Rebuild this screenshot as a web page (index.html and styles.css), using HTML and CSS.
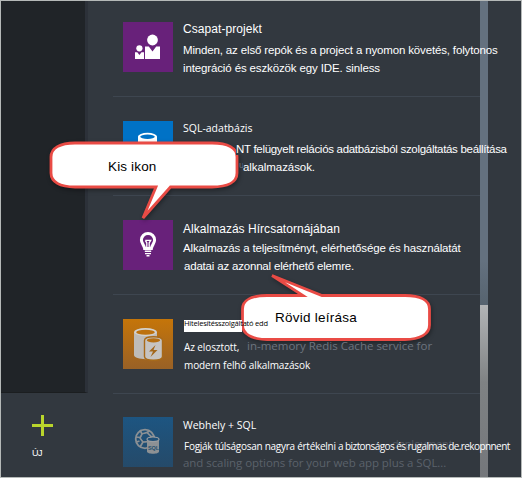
FILE: index.html
```html
<!DOCTYPE html>
<html lang="hu">
<head>
<meta charset="utf-8">
<title>Új</title>
<link rel="stylesheet" href="styles.css">
</head>
<body>
<div class="frame">
  <aside class="side">
    <div class="side-dark"></div>
    <div class="new">
      <svg width="21" height="21" viewBox="0 0 21 21"><path d="M10.5 0v21M0 10.5h21" stroke="#b9d52c" stroke-width="3"/></svg>
      <span class="new-label">ÚJ</span>
    </div>
  </aside>
  <main class="list">
    <article class="item">
      <div class="icon purple">
        <svg width="50" height="50" viewBox="0 0 50 50" fill="#fff"><circle cx="29.5" cy="18" r="5.4"/><path d="M22 24.4h3.8l3.7 5 3.7-5H37V37H22z"/><circle cx="16.4" cy="26.3" r="3.1"/><path d="M12 30.2h2.3l2.1 2.7 2.1-2.7H21V37h-9z"/></svg>
      </div>
      <div class="text">
        <h2 class="line t1">Csapat-projekt</h2>
        <p class="line gap d1">Minden, az első repók és a project a nyomon követés, folytonos</p>
        <p class="line d2">integráció és eszközök egy IDE. sinless</p>
      </div>
    </article>
    <article class="item">
      <div class="icon blue">
        <svg width="50" height="50" viewBox="0 0 50 50"><path d="M15 15.500v18c0 5 19 5 19 0v-18z" fill="#fff"/><ellipse cx="24.500" cy="15.500" rx="9.500" ry="3.700" fill="#fff"/><ellipse cx="24.500" cy="15.700" rx="7.300" ry="2.200" fill="#0072c6"/></svg>
      </div>
      <div class="text raised up">
        <h2 class="line t2">SQL-adatbázis</h2>
        <p class="line gap d3"><span class="patch">NT felügyelt relációs adatbázisból szolgáltatás beállítása</span></p>
        <p class="line d4"><span class="ghost">u</span>alkalmazások.</p>
      </div>
    </article>
    <article class="item">
      <div class="icon purple">
        <svg width="50" height="50" viewBox="0 0 50 50" fill="none" stroke="#fff"><path d="M25 13.500a6.600 6.600 0 0 0-6.600 6.600c0 3.300 2.700 4.800 3.200 8.300h6.800c.5-3.500 3.200-5 3.200-8.300a6.600 6.600 0 0 0-6.600-6.600z" stroke-width="3"/><path d="M22.300 20.300h5.400l-1.500 2.500v6M22.300 20.300l1.500 2.500v6" stroke-width="1.300"/><path d="M21.800 31.300h6.400M22 33.600h6M23.500 35.700h3" stroke-width="1.400"/></svg>
      </div>
      <div class="text up1">
        <h2 class="line t3">Alkalmazás Hírcsatornájában</h2>
        <p class="line gap1 d5">Alkalmazás a teljesítményt, elérhetősége és használatát</p>
        <p class="line d6">adatai az azonnal elérhető elemre.</p>
      </div>
    </article>
    <article class="item">
      <div class="icon orange">
        <svg width="50" height="50" viewBox="0 0 50 50"><path d="M11 13v23c0 5.500 23 5.500 23 0V13z" fill="#bfbcb8"/><ellipse cx="22.500" cy="13" rx="11.500" ry="4" fill="#d4d2ce"/><ellipse cx="22.500" cy="13.200" rx="9.300" ry="2.500" fill="#bd720f"/><path d="M21.500 21.500v16c0 5 18 5 18 0v-16c0-5-18-5-18 0z" fill="#c6c4c2" stroke="#a86a19" stroke-width="1.400"/><ellipse cx="30.500" cy="21.300" rx="6.700" ry="2.100" fill="#b56f13"/><path d="M32.500 26l-6.500 6.500h4l-2.500 5.500 7-7h-4z" fill="#a3671b"/></svg>
      </div>
      <div class="text raised">
        <h2 class="bar t4">Hitelesítésszolgáltató edd</h2>
        <p class="line gap4 d7">Az elosztott,<span class="dim memory">in-memory Redis Cache service for</span></p>
        <p class="line d8">modern felhő alkalmazások</p>
      </div>
    </article>
    <article class="item last">
      <div class="icon navy">
        <svg width="50" height="50" viewBox="0 0 50 50"><circle cx="22" cy="22" r="9.300" fill="none" stroke="#8b9094" stroke-width="1.800"/><path d="M19 17l5-1.500 4 4-2 5-6 .5-3-4zM13 20l4 .5M19 17l-2-4M24 15.500l3-2M20 25l-3 5M13.500 25l3-1M28 19.500h4" fill="none" stroke="#8b9094" stroke-width="1.700"/><path d="M20 17.500l3.500-.5 2.500 3-1 3.500-4.500.5-2-3z" fill="#205077"/><path d="M24 22.500v12c0 3 12 3 12 0v-12z" fill="#8d9194"/><ellipse cx="30" cy="22.300" rx="6" ry="2.300" fill="#205077" stroke="#9a9da0" stroke-width="1.200"/><text x="24.900" y="32.500" class="sql">SQL</text></svg>
      </div>
      <div class="text">
        <h2 class="line t5">Webhely + SQL</h2>
        <p class="line gap d9"><span class="dim deploy">deployment,</span>Fogják túlságosan nagyra értékelni <span class="tight">a biztonságos és rugalmas de.rekopnnent</span></p>
        <p class="line scaling">and scaling options for your web app plus a SQL...</p>
      </div>
    </article>
  </main>
  <div class="scroll"><div class="thumb"></div></div>

  <div class="callout one">
    <svg width="196" height="88" viewBox="46 138 196 88"><path d="M75 143H212C228 143 237 148 237 157V173C237 182 228 187 212 187H170.500L143 218L156 187H75C60 187 51 182 51 173V157C51 148 60 143 75 143Z"/></svg>
    <span class="callout-text kis">Kis ikon</span>
  </div>
  <div class="callout two">
    <svg width="196" height="76" viewBox="238 270 196 76"><path d="M267 295.500H303L272 275.500L322 295.500H405C420 295.500 429.500 300 429.500 309V325C429.500 334 420 339.500 405 339.500H267C252 339.500 242.500 334 242.500 325V309C242.500 300 252 295.500 267 295.500Z"/></svg>
    <span class="callout-text rovid">Rövid leírása</span>
  </div>
</div>
</body>
</html>
```
FILE: styles.css
```css
* { box-sizing: border-box; margin: 0; padding: 0; }
body { width: 522px; height: 478px; overflow: hidden; background: #32383f; }
svg { display: block; }

.frame {
  position: relative;
  display: flex;
  width: 522px;
  height: 478px;
  border: 1px solid #b5b9b8;
  background: #32383f;
  font-family: "Liberation Sans", sans-serif;
  color: #fff;
  overflow: hidden;
}

.side { width: 87px; flex: none; }
.side-dark {
  height: 392px;
  background: #202428;
  border-right: 3px solid #2c3139;
  border-bottom: 1px solid #1b1e20;
}
.new { padding: 22px 0 0 31px; }
.new-label { display: block; margin-top: 11px; font-size: 9px; line-height: 12px; letter-spacing: -0.6px; }

.list { width: 367px; flex: none; margin-left: 25px; }
.item { display: flex; height: 99px; padding: 24px 0 0 10px; border-bottom: 1px solid #3e4650; }
.item:first-child { height: 96px; padding-top: 21px; }
.item.last { border: 0; height: 83px; padding-top: 23px; }
.icon { width: 50px; height: 50px; flex: none; }
.purple { background: #68217a; }
.blue { background: #0072c6; }
.orange { background: linear-gradient(#c57509, #996126); }
.navy { background: linear-gradient(#1d5581, #254a69); }
.sql { font: bold 5.5px "Liberation Sans", sans-serif; fill: #25506f; }

.text { position: relative; z-index: 1; margin: -2px 0 0 10px; width: 297px; flex: none; white-space: nowrap; }
.up1 { margin-top: 0; }
.last .text { margin-top: -1px; }
.text.raised { z-index: 3; }
.line { display: block; height: 18px; font-size: 11.5px; line-height: 18px; font-weight: 400; }
.gap { margin-top: 3px; }
.gap1 { margin-top: 1px; }

.t1 { font-size: 12px; letter-spacing: 0.07px; }
.d1 { letter-spacing: -0.155px; }
.d2 { letter-spacing: -0.13px; }
.t2, .t5 { font-family: "Open Sans", sans-serif; font-size: 10.5px; }
.d3 { padding-left: 53px; letter-spacing: -0.3px; }
.patch { display: block; width: 244px; height: 15px; background: linear-gradient(90deg, #32383f 20px, transparent 20px); }
.d4 { padding-left: 56px; letter-spacing: -0.07px; }
.ghost { display: inline-block; width: 4px; height: 12px; line-height: 12px; font-size: 9px; color: #66727f; overflow: hidden; }
.t3 { font-size: 12px; letter-spacing: 0.03px; }
.d5 { letter-spacing: -0.16px; }
.d6 { padding-left: 1px; letter-spacing: -0.19px; }

.bar {
  width: 58px;
  height: 12px;
  margin: 3px 0 0 1px;
  background: #fff;
  color: #000;
  font: 7.5px/7px "Open Sans", sans-serif;
  letter-spacing: -0.21px;
}
.gap4 { margin-top: 6px; }
.d7, .d8, .d9 { padding-left: 1px; font-family: "Open Sans", sans-serif; font-size: 10px; letter-spacing: -0.1px; }
.dim { color: #6d747e; font-family: "Open Sans", sans-serif; }
.memory { position: absolute; left: 64px; top: 20px; font-size: 11.5px; letter-spacing: 0; }
.d9 { position: relative; letter-spacing: -0.27px; }
.deploy { position: absolute; z-index: -1; left: 209px; top: -2px; font-size: 11px; color: #525962; letter-spacing: -0.1px; }
.tight { letter-spacing: -0.58px; }
.scaling { margin-top: -1px; font-family: "Open Sans", sans-serif; color: #5b626b; letter-spacing: -0.06px; }

.scroll { width: 8px; flex: none; background: linear-gradient(#64717f 260px, #56636f 304px); padding-top: 304px; }
.thumb { height: 172px; background: linear-gradient(#b2b4b6, #7f8284 45%, #74777b); }

.callout { position: absolute; z-index: 2; }
.callout path { fill: #fff; stroke: #e94b45; stroke-width: 2.8; stroke-linejoin: miter; }
.callout svg { filter: drop-shadow(1px 2px 2px rgba(0, 0, 0, 0.35)); }
.one { left: 45px; top: 137px; }
.two { left: 237px; top: 269px; }
.callout-text { position: absolute; color: #000; font-size: 13.5px; line-height: 18px; white-space: nowrap; }
.kis { left: 62px; top: 20px; letter-spacing: 0.15px; }
.rovid { left: 37px; top: 39px; letter-spacing: 0.25px; }
```
